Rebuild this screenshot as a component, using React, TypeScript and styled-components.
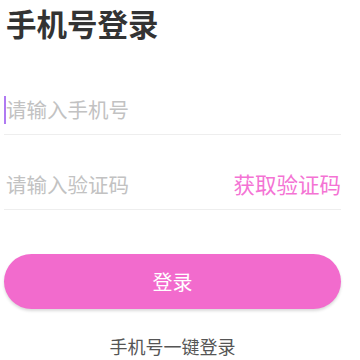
import React from "react";
import styled, { createGlobalStyle } from "styled-components";

const Global = createGlobalStyle`
  html, body { margin: 0; padding: 0; background: #ffffff; }
  body { font-family: "Noto Sans CJK SC", "Noto Sans", sans-serif; }
  * { box-sizing: border-box; }
`;

const Page = styled.div`
  width: 360px;
  height: 360px;
  overflow: hidden;
  padding: 0 19px 0 4px;
  display: flex;
  flex-direction: column;
`;

const Title = styled.h1`
  margin: 0 0 14px 0;
  padding-left: 2px;
  font-size: 30.5px;
  line-height: 46px;
  font-weight: 700;
  color: #333333;
`;

const Field = styled.div`
  position: relative;
  display: flex;
  align-items: center;
  justify-content: space-between;
  height: 75px;
  padding-top: 24px;
  border-bottom: 1px solid #eeeeee;
`;

const Placeholder = styled.span`
  padding-left: 2px;
  font-size: 20.5px;
  line-height: 28px;
  font-weight: 400;
  color: #c2c2c2;
`;

const Caret = styled.span`
  position: absolute;
  left: 0;
  top: 36px;
  width: 2px;
  height: 28px;
  background: #b07af2;
`;

const CodeLink = styled.span`
  font-size: 21.5px;
  line-height: 28px;
  font-weight: 400;
  color: #f473d4;
`;

const LoginButton = styled.button`
  margin-top: 44px;
  height: 55px;
  width: 100%;
  border: none;
  border-radius: 28px;
  background: #f26bcd;
  color: #ffffff;
  font-family: inherit;
  font-size: 20px;
  box-shadow: 0 2px 3px rgba(0, 0, 0, 0.15);
`;

const OneKey = styled.div`
  margin-top: 25px;
  text-align: center;
  font-size: 18px;
  line-height: 24px;
  color: #555555;
`;

export default function App() {
  return (
    <>
      <Global />
      <Page>
        <Title>手机号登录</Title>
        <Field>
          <Caret />
          <Placeholder>请输入手机号</Placeholder>
        </Field>
        <Field>
          <Placeholder>请输入验证码</Placeholder>
          <CodeLink>获取验证码</CodeLink>
        </Field>
        <LoginButton>登录</LoginButton>
        <OneKey>手机号一键登录</OneKey>
      </Page>
    </>
  );
}
